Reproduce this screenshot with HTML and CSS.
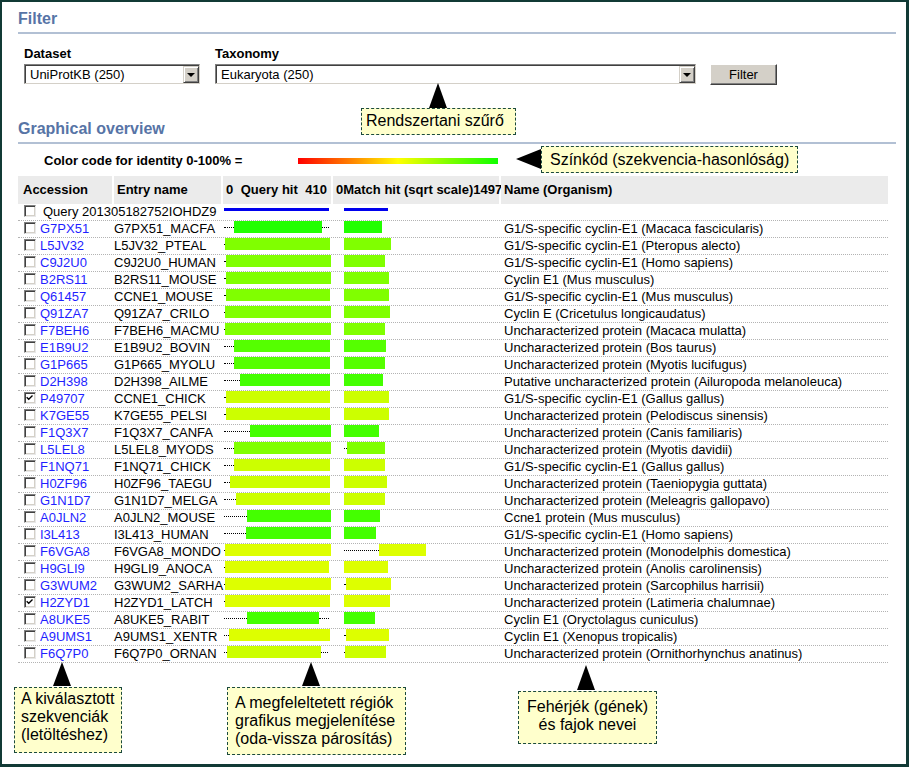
FILE: index.html
```html
<!DOCTYPE html>
<html lang="en">
<head>
<meta charset="utf-8">
<title>Filter – Graphical overview</title>
<link rel="stylesheet" href="styles.css">
</head>
<body>
<div class="frame">
  <section class="filter">
    <h2 class="section-title">Filter</h2>
    <div class="filter-row">
      <div class="field">
        <span class="field-label">Dataset</span>
        <div class="select select-dataset"><span class="select-text">UniProtKB (250)</span><span class="dd-btn"><span class="dd-tri"></span></span></div>
      </div>
      <div class="field field-tax">
        <span class="field-label">Taxonomy</span>
        <div class="select select-taxonomy"><span class="select-text">Eukaryota (250)</span><span class="dd-btn"><span class="dd-tri"></span></span></div>
      </div>
      <button class="btn" type="button">Filter</button>
    </div>
  </section>

  <section class="overview">
    <h2 class="section-title">Graphical overview</h2>
    <div class="legend">
      <span class="legend-label">Color code for identity 0-100% =</span>
      <span class="legend-bar"></span>
    </div>

    <div class="table">
      <div class="thead">
        <div class="th">Accession</div>
        <div class="th">Entry name</div>
        <div class="th th-q"><span>0</span><span>Query hit</span><span>410</span></div>
        <div class="th">0Match hit (sqrt scale)1497</div>
        <div class="th">Name (Organism)</div>
      </div>

      <div class="row row-query">
        <div class="c-acc c-span"><span class="cb"></span><span class="qlabel">Query 201305182752IOHDZ9</span></div>
        <div class="c-q"><span class="qline" style="width:105px"></span></div>
        <div class="c-m"><span class="qline" style="width:44px"></span></div>
        <div class="c-name"></div>
      </div>

      <div class="row">
        <div class="c-acc"><span class="cb"></span><a class="acc">G7PX51</a></div>
        <div class="c-entry">G7PX51_MACFA</div>
        <div class="c-q"><span class="dots" style="width:10px"></span><span class="bar" style="width:88px;background:#22ff00"></span><span class="dots" style="width:7px"></span></div>
        <div class="c-m"><span class="bar" style="width:38px;background:#22ff00"></span></div>
        <div class="c-name">G1/S-specific cyclin-E1 (Macaca fascicularis)</div>
      </div>
      <div class="row">
        <div class="c-acc"><span class="cb"></span><a class="acc">L5JV32</a></div>
        <div class="c-entry">L5JV32_PTEAL</div>
        <div class="c-q"><span class="dots" style="width:1px"></span><span class="bar" style="width:105px;background:#80ff00"></span></div>
        <div class="c-m"><span class="bar" style="width:47px;background:#80ff00"></span></div>
        <div class="c-name">G1/S-specific cyclin-E1 (Pteropus alecto)</div>
      </div>
      <div class="row">
        <div class="c-acc"><span class="cb"></span><a class="acc">C9J2U0</a></div>
        <div class="c-entry">C9J2U0_HUMAN</div>
        <div class="c-q"><span class="dots" style="width:2px"></span><span class="bar" style="width:105px;background:#80ff00"></span></div>
        <div class="c-m"><span class="bar" style="width:41px;background:#80ff00"></span></div>
        <div class="c-name">G1/S-specific cyclin-E1 (Homo sapiens)</div>
      </div>
      <div class="row">
        <div class="c-acc"><span class="cb"></span><a class="acc">B2RS11</a></div>
        <div class="c-entry">B2RS11_MOUSE</div>
        <div class="c-q"><span class="dots" style="width:2px"></span><span class="bar" style="width:105px;background:#80ff00"></span></div>
        <div class="c-m"><span class="bar" style="width:45px;background:#80ff00"></span></div>
        <div class="c-name">Cyclin E1 (Mus musculus)</div>
      </div>
      <div class="row">
        <div class="c-acc"><span class="cb"></span><a class="acc">Q61457</a></div>
        <div class="c-entry">CCNE1_MOUSE</div>
        <div class="c-q"><span class="dots" style="width:2px"></span><span class="bar" style="width:104px;background:#80ff00"></span></div>
        <div class="c-m"><span class="bar" style="width:45px;background:#80ff00"></span></div>
        <div class="c-name">G1/S-specific cyclin-E1 (Mus musculus)</div>
      </div>
      <div class="row">
        <div class="c-acc"><span class="cb"></span><a class="acc">Q91ZA7</a></div>
        <div class="c-entry">Q91ZA7_CRILO</div>
        <div class="c-q"><span class="dots" style="width:1px"></span><span class="bar" style="width:106px;background:#80ff00"></span></div>
        <div class="c-m"><span class="bar" style="width:46px;background:#80ff00"></span></div>
        <div class="c-name">Cyclin E (Cricetulus longicaudatus)</div>
      </div>
      <div class="row">
        <div class="c-acc"><span class="cb"></span><a class="acc">F7BEH6</a></div>
        <div class="c-entry">F7BEH6_MACMU</div>
        <div class="c-q"><span class="dots" style="width:1px"></span><span class="bar" style="width:106px;background:#80ff00"></span></div>
        <div class="c-m"><span class="bar" style="width:41px;background:#80ff00"></span></div>
        <div class="c-name">Uncharacterized protein (Macaca mulatta)</div>
      </div>
      <div class="row">
        <div class="c-acc"><span class="cb"></span><a class="acc">E1B9U2</a></div>
        <div class="c-entry">E1B9U2_BOVIN</div>
        <div class="c-q"><span class="dots" style="width:10px"></span><span class="bar" style="width:96px;background:#55ff00"></span></div>
        <div class="c-m"><span class="bar" style="width:42px;background:#55ff00"></span></div>
        <div class="c-name">Uncharacterized protein (Bos taurus)</div>
      </div>
      <div class="row">
        <div class="c-acc"><span class="cb"></span><a class="acc">G1P665</a></div>
        <div class="c-entry">G1P665_MYOLU</div>
        <div class="c-q"><span class="dots" style="width:10px"></span><span class="bar" style="width:96px;background:#55ff00"></span></div>
        <div class="c-m"><span class="bar" style="width:41px;background:#55ff00"></span></div>
        <div class="c-name">Uncharacterized protein (Myotis lucifugus)</div>
      </div>
      <div class="row">
        <div class="c-acc"><span class="cb"></span><a class="acc">D2H398</a></div>
        <div class="c-entry">D2H398_AILME</div>
        <div class="c-q"><span class="dots" style="width:16px"></span><span class="bar" style="width:90px;background:#44ff00"></span></div>
        <div class="c-m"><span class="bar" style="width:39px;background:#44ff00"></span></div>
        <div class="c-name">Putative uncharacterized protein (Ailuropoda melanoleuca)</div>
      </div>
      <div class="row">
        <div class="c-acc"><span class="cb checked"><svg viewBox="0 0 12 12" width="10" height="10"><polyline points="2,5 4.5,7.5 9,3" fill="none" stroke="#000" stroke-width="1.6"/></svg></span><a class="acc">P49707</a></div>
        <div class="c-entry">CCNE1_CHICK</div>
        <div class="c-q"><span class="dots" style="width:2px"></span><span class="bar" style="width:104px;background:#ccff00"></span></div>
        <div class="c-m"><span class="bar" style="width:45px;background:#ccff00"></span></div>
        <div class="c-name">G1/S-specific cyclin-E1 (Gallus gallus)</div>
      </div>
      <div class="row">
        <div class="c-acc"><span class="cb"></span><a class="acc">K7GE55</a></div>
        <div class="c-entry">K7GE55_PELSI</div>
        <div class="c-q"><span class="dots" style="width:2px"></span><span class="bar" style="width:104px;background:#ccff00"></span></div>
        <div class="c-m"><span class="bar" style="width:45px;background:#ccff00"></span></div>
        <div class="c-name">Uncharacterized protein (Pelodiscus sinensis)</div>
      </div>
      <div class="row">
        <div class="c-acc"><span class="cb"></span><a class="acc">F1Q3X7</a></div>
        <div class="c-entry">F1Q3X7_CANFA</div>
        <div class="c-q"><span class="dots" style="width:26px"></span><span class="bar" style="width:81px;background:#44ff00"></span></div>
        <div class="c-m"><span class="bar" style="width:35px;background:#44ff00"></span></div>
        <div class="c-name">Uncharacterized protein (Canis familiaris)</div>
      </div>
      <div class="row">
        <div class="c-acc"><span class="cb"></span><a class="acc">L5LEL8</a></div>
        <div class="c-entry">L5LEL8_MYODS</div>
        <div class="c-q"><span class="dots" style="width:10px"></span><span class="bar" style="width:97px;background:#80ff00"></span></div>
        <div class="c-m"><span class="dots" style="width:3px"></span><span class="bar" style="width:38px;background:#80ff00"></span></div>
        <div class="c-name">Uncharacterized protein (Myotis davidii)</div>
      </div>
      <div class="row">
        <div class="c-acc"><span class="cb"></span><a class="acc">F1NQ71</a></div>
        <div class="c-entry">F1NQ71_CHICK</div>
        <div class="c-q"><span class="dots" style="width:10px"></span><span class="bar" style="width:96px;background:#ccff00"></span></div>
        <div class="c-m"><span class="bar" style="width:41px;background:#ccff00"></span></div>
        <div class="c-name">G1/S-specific cyclin-E1 (Gallus gallus)</div>
      </div>
      <div class="row">
        <div class="c-acc"><span class="cb"></span><a class="acc">H0ZF96</a></div>
        <div class="c-entry">H0ZF96_TAEGU</div>
        <div class="c-q"><span class="dots" style="width:6px"></span><span class="bar" style="width:100px;background:#ccff00"></span></div>
        <div class="c-m"><span class="bar" style="width:43px;background:#ccff00"></span></div>
        <div class="c-name">Uncharacterized protein (Taeniopygia guttata)</div>
      </div>
      <div class="row">
        <div class="c-acc"><span class="cb"></span><a class="acc">G1N1D7</a></div>
        <div class="c-entry">G1N1D7_MELGA</div>
        <div class="c-q"><span class="dots" style="width:12px"></span><span class="bar" style="width:94px;background:#ccff00"></span></div>
        <div class="c-m"><span class="bar" style="width:41px;background:#ccff00"></span></div>
        <div class="c-name">Uncharacterized protein (Meleagris gallopavo)</div>
      </div>
      <div class="row">
        <div class="c-acc"><span class="cb"></span><a class="acc">A0JLN2</a></div>
        <div class="c-entry">A0JLN2_MOUSE</div>
        <div class="c-q"><span class="dots" style="width:23px"></span><span class="bar" style="width:84px;background:#44ff00"></span></div>
        <div class="c-m"><span class="bar" style="width:36px;background:#44ff00"></span></div>
        <div class="c-name">Ccne1 protein (Mus musculus)</div>
      </div>
      <div class="row">
        <div class="c-acc"><span class="cb"></span><a class="acc">I3L413</a></div>
        <div class="c-entry">I3L413_HUMAN</div>
        <div class="c-q"><span class="dots" style="width:22px"></span><span class="bar" style="width:85px;background:#44ff00"></span></div>
        <div class="c-m"><span class="bar" style="width:32px;background:#44ff00"></span></div>
        <div class="c-name">G1/S-specific cyclin-E1 (Homo sapiens)</div>
      </div>
      <div class="row">
        <div class="c-acc"><span class="cb"></span><a class="acc">F6VGA8</a></div>
        <div class="c-entry">F6VGA8_MONDO</div>
        <div class="c-q"><span class="dots" style="width:1px"></span><span class="bar" style="width:106px;background:#ddff00"></span></div>
        <div class="c-m"><span class="dots" style="width:35px"></span><span class="bar" style="width:47px;background:#ddff00"></span></div>
        <div class="c-name">Uncharacterized protein (Monodelphis domestica)</div>
      </div>
      <div class="row">
        <div class="c-acc"><span class="cb"></span><a class="acc">H9GLI9</a></div>
        <div class="c-entry">H9GLI9_ANOCA</div>
        <div class="c-q"><span class="dots" style="width:1px"></span><span class="bar" style="width:104px;background:#ddff00"></span></div>
        <div class="c-m"><span class="bar" style="width:44px;background:#ddff00"></span></div>
        <div class="c-name">Uncharacterized protein (Anolis carolinensis)</div>
      </div>
      <div class="row">
        <div class="c-acc"><span class="cb"></span><a class="acc">G3WUM2</a></div>
        <div class="c-entry">G3WUM2_SARHA</div>
        <div class="c-q"><span class="dots" style="width:1px"></span><span class="bar" style="width:106px;background:#ddff00"></span></div>
        <div class="c-m"><span class="dots" style="width:2px"></span><span class="bar" style="width:45px;background:#ddff00"></span></div>
        <div class="c-name">Uncharacterized protein (Sarcophilus harrisii)</div>
      </div>
      <div class="row">
        <div class="c-acc"><span class="cb checked"><svg viewBox="0 0 12 12" width="10" height="10"><polyline points="2,5 4.5,7.5 9,3" fill="none" stroke="#000" stroke-width="1.6"/></svg></span><a class="acc">H2ZYD1</a></div>
        <div class="c-entry">H2ZYD1_LATCH</div>
        <div class="c-q"><span class="dots" style="width:1px"></span><span class="bar" style="width:105px;background:#ddff00"></span></div>
        <div class="c-m"><span class="bar" style="width:46px;background:#ddff00"></span></div>
        <div class="c-name">Uncharacterized protein (Latimeria chalumnae)</div>
      </div>
      <div class="row">
        <div class="c-acc"><span class="cb"></span><a class="acc">A8UKE5</a></div>
        <div class="c-entry">A8UKE5_RABIT</div>
        <div class="c-q"><span class="dots" style="width:23px"></span><span class="bar" style="width:72px;background:#44ff00"></span><span class="dots" style="width:10px"></span></div>
        <div class="c-m"><span class="bar" style="width:31px;background:#44ff00"></span></div>
        <div class="c-name">Cyclin E1 (Oryctolagus cuniculus)</div>
      </div>
      <div class="row">
        <div class="c-acc"><span class="cb"></span><a class="acc">A9UMS1</a></div>
        <div class="c-entry">A9UMS1_XENTR</div>
        <div class="c-q"><span class="dots" style="width:5px"></span><span class="bar" style="width:101px;background:#ddff00"></span></div>
        <div class="c-m"><span class="dots" style="width:2px"></span><span class="bar" style="width:43px;background:#ddff00"></span></div>
        <div class="c-name">Cyclin E1 (Xenopus tropicalis)</div>
      </div>
      <div class="row">
        <div class="c-acc"><span class="cb"></span><a class="acc">F6Q7P0</a></div>
        <div class="c-entry">F6Q7P0_ORNAN</div>
        <div class="c-q"><span class="dots" style="width:3px"></span><span class="bar" style="width:94px;background:#ccff00"></span><span class="dots" style="width:7px"></span></div>
        <div class="c-m"><span class="dots" style="width:1px"></span><span class="bar" style="width:41px;background:#ccff00"></span></div>
        <div class="c-name">Uncharacterized protein (Ornithorhynchus anatinus)</div>
      </div>
    </div>
  </section>

  <span class="arrow-up ar-taxon"></span>
  <div class="callout co-taxon">Rendszertani szűrő</div>

  <span class="arrow-left ar-color"></span>
  <div class="callout co-color">Színkód (szekvencia-hasonlóság)</div>

  <span class="arrow-up ar-sel"></span>
  <div class="callout co-sel">A kiválasztott<br>szekvenciák<br>(letöltéshez)</div>

  <span class="arrow-up ar-graph"></span>
  <div class="callout co-graph">A megfeleltetett régiók<br>grafikus megjelenítése<br>(oda-vissza párosítás)</div>

  <span class="arrow-up ar-names"></span>
  <div class="callout co-names">Fehérjék (gének)<br>és fajok nevei</div>
</div>
</body>
</html>
```
FILE: styles.css
```css
* { box-sizing: border-box; }

html, body {
  margin: 0;
  padding: 0;
  background: #fff;
}

body {
  font-family: "Liberation Sans", Arial, sans-serif;
  font-size: 13px;
  color: #000;
}

.frame {
  position: relative;
  width: 909px;
  height: 767px;
  border-style: solid;
  border-color: #113a35;
  border-width: 2px 3px 3px 2px;
  padding: 8px 10px 0 16px;
  overflow: hidden;
  background: #fff;
}

.section-title {
  margin: 0;
  font-size: 16px;
  line-height: 18px;
  font-weight: bold;
  color: #5774a6;
  padding-bottom: 4px;
  border-bottom: 2px solid #b2c0d4;
}

/* ---------- Filter ---------- */
.filter-row {
  display: flex;
  align-items: flex-start;
  margin: 12px 0 0 6px;
}

.field {
  display: flex;
  flex-direction: column;
}

.field-tax { margin-left: 15px; }

.field-label {
  font-weight: bold;
  font-size: 13px;
  line-height: 16px;
  margin-bottom: 2px;
}

.select {
  display: flex;
  align-items: center;
  justify-content: space-between;
  height: 20px;
  border: 1px solid;
  border-color: #808080 #d4d0c8 #d4d0c8 #808080;
  box-shadow: inset 1px 1px 0 #404040;
  background: #fff;
  padding: 1px 0 0 5px;
}

.select-dataset { width: 176px; }
.select-taxonomy { width: 481px; }

.select-text {
  font-size: 13px;
  line-height: 16px;
  white-space: nowrap;
}

.dd-btn {
  display: flex;
  align-items: center;
  justify-content: center;
  width: 16px;
  height: 17px;
  background: #d4d0c8;
  border: 1px solid;
  border-color: #d4d0c8 #404040 #404040 #d4d0c8;
  box-shadow: inset 1px 1px 0 #fff, inset -1px -1px 0 #808080;
}

.dd-tri {
  width: 0;
  height: 0;
  border-left: 4px solid transparent;
  border-right: 4px solid transparent;
  border-top: 4px solid #000;
  margin-top: 1px;
}

.btn {
  margin: 18px 0 0 14px;
  width: 67px;
  height: 21px;
  padding: 0;
  background: #d4d0c8;
  border: 1px solid;
  border-color: #fff #404040 #404040 #fff;
  box-shadow: inset -1px -1px 0 #808080;
  font-family: "Liberation Sans", Arial, sans-serif;
  font-size: 13px;
  color: #000;
}

/* ---------- Overview ---------- */
.overview { margin-top: 35px; }

.legend {
  display: flex;
  align-items: flex-start;
  height: 16px;
  margin: 9px 0 0 26px;
}

.legend-label {
  width: 254px;
  font-weight: bold;
  line-height: 16px;
  white-space: nowrap;
}

.legend-bar {
  width: 200px;
  height: 6px;
  margin-top: 5px;
  background: linear-gradient(to right, #ff0000 0%, #ff7a00 25%, #ffff00 50%, #80ff00 75%, #10ff00 100%);
}

.table {
  width: 870px;
  margin-top: 7px;
}

.thead,
.row {
  display: grid;
  grid-template-columns: 94px 107px 108px 166px 387px;
  column-gap: 2px;
}

.thead { height: 28px; }

.th {
  background: #ebebeb;
  font-weight: bold;
  line-height: 28px;
  padding-left: 3px;
  white-space: nowrap;
}

.thead .th:first-child { padding-left: 5px; }

.th-q {
  display: flex;
  justify-content: space-between;
  padding-right: 4px;
}

.row {
  height: 17px;
  line-height: 16px;
  border-bottom: 1px dotted #b3b3b3;
  align-items: start;
}

.c-acc {
  display: flex;
  align-items: flex-start;
  padding-left: 6px;
  white-space: nowrap;
}

.c-span { grid-column: span 2; }

.cb {
  display: flex;
  align-items: center;
  justify-content: center;
  width: 12px;
  height: 12px;
  margin-top: 1px;
  flex: none;
  background: #fff;
  border: 1px solid;
  border-color: #808080 #e8e8e8 #e8e8e8 #808080;
  box-shadow: inset 1px 1px 0 #404040, inset -1px -1px 0 #d4d0c8;
}

.acc {
  margin-left: 4px;
  color: #1f1fff;
  text-decoration: none;
}

.qlabel { margin-left: 7px; }

.c-entry {
  white-space: nowrap;
  padding-left: 0;
}

.c-q,
.c-m {
  display: flex;
  align-items: center;
  height: 12px;
}

.c-q { padding-left: 1px; }
.c-m { padding-left: 11px; }

.row-query .c-q,
.row-query .c-m {
  height: 3px;
  margin-top: 4px;
}

.qline {
  display: block;
  height: 3px;
  background: #0000ee;
}

.dots {
  display: block;
  height: 0;
  flex: none;
  border-top: 1px dotted #000;
}

.bar {
  display: block;
  height: 12px;
  flex: none;
}

.c-name {
  padding-left: 3px;
  white-space: nowrap;
}

/* ---------- Callouts (overlay annotations) ---------- */
.callout {
  position: absolute;
  background: #ffffcc;
  border: 1px dashed #1b4a3d;
  font-size: 16px;
  line-height: 18px;
  color: #000;
  white-space: nowrap;
}

.arrow-up {
  position: absolute;
  width: 0;
  height: 0;
  border-left: 9px solid transparent;
  border-right: 9px solid transparent;
  border-bottom: 25px solid #000;
}

.arrow-left {
  position: absolute;
  width: 0;
  height: 0;
  border-top: 10px solid transparent;
  border-bottom: 10px solid transparent;
  border-right: 25px solid #000;
}

.ar-taxon { left: 427px; top: 81px; }
.co-taxon {
  left: 359px;
  top: 106px;
  width: 155px;
  height: 27px;
  padding: 3px 0 0 4px;
}

.ar-color { left: 514px; top: 147px; }
.co-color {
  left: 539px;
  top: 144px;
  width: 257px;
  height: 27px;
  padding: 4px 0 0 8px;
}

.ar-sel { left: 51px; top: 660px; border-bottom-width: 24px; }
.co-sel {
  left: 12px;
  top: 685px;
  width: 108px;
  height: 66px;
  padding: 2px 0 0 6px;
}

.ar-graph { left: 300px; top: 660px; border-bottom-width: 24px; }
.co-graph {
  left: 225px;
  top: 685px;
  width: 179px;
  height: 68px;
  padding: 6px 0 0 7px;
}

.ar-names { left: 575px; top: 663px; }
.co-names {
  left: 516px;
  top: 689px;
  width: 139px;
  height: 53px;
  padding-top: 6px;
  text-align: center;
}
```
